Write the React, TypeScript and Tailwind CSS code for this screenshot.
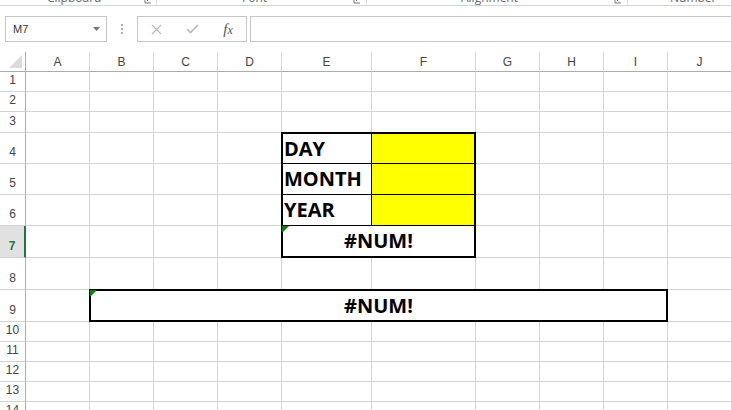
import React from "react";

const COLS = ["A", "B", "C", "D", "E", "F", "G", "H", "I", "J"];
const ROWS = Array.from({ length: 15 }, (_, i) => i + 1);

// cells hidden under the merged / bordered blocks
function isCovered(r: number, c: number) {
  if (r >= 4 && r <= 7 && (c === 4 || c === 5)) return true;
  if (r === 9 && c >= 1 && c <= 8) return true;
  return false;
}

function ErrorMark({ className }: { className: string }) {
  return (
    <svg className={className} width="7" height="7" viewBox="0 0 7 7">
      <polygon points="0,0 7,0 0,7" fill="#107c10" />
    </svg>
  );
}

function Launcher() {
  return (
    <svg width="8" height="8" viewBox="0 0 8 8" className="mt-[-4px]">
      <path d="M1 1v6h6M3 5l4-4" stroke="#777" fill="none" strokeWidth="1" />
    </svg>
  );
}

function Ribbon() {
  return (
    <div className="h-[6px] overflow-hidden border-b border-[#d5d5d5] flex font-['Open_Sans',sans-serif] text-[12px] leading-[12px] text-[#666]">
      <div className="w-[157px] flex border-r border-[#e1e1e1]">
        <span className="ml-[47px] mt-[-8px]">Clipboard</span>
        <span className="ml-auto mr-[4px]">
          <Launcher />
        </span>
      </div>
      <div className="w-[210px] flex border-r border-[#e1e1e1]">
        <span className="ml-[85px] mt-[-8px]">Font</span>
        <span className="ml-auto mr-[5px]">
          <Launcher />
        </span>
      </div>
      <div className="w-[261px] flex border-r border-[#e1e1e1]">
        <span className="ml-[94px] mt-[-8px]">Alignment</span>
        <span className="ml-auto mr-[5px]">
          <Launcher />
        </span>
      </div>
      <div className="flex-1 flex">
        <span className="ml-[42px] mt-[-8px]">Number</span>
      </div>
    </div>
  );
}

function FormulaBar() {
  return (
    <div className="mt-[10px] flex h-[26px] pl-[5px] font-['Liberation_Sans',sans-serif]">
      <div className="w-[102px] flex items-center border border-[#c6c6c6] bg-white">
        <span className="ml-[7px] text-[11px] text-[#333]">M7</span>
        <svg className="ml-auto mr-[6px]" width="7" height="4" viewBox="0 0 7 4">
          <polygon points="0,0 7,0 3.5,4" fill="#777" />
        </svg>
      </div>
      <div className="w-[30px] flex flex-col items-center justify-center gap-[2px]">
        <span className="w-[2px] h-[2px] bg-[#b0b0b0]" />
        <span className="w-[2px] h-[2px] bg-[#b0b0b0]" />
        <span className="w-[2px] h-[2px] bg-[#b0b0b0]" />
      </div>
      <div className="w-[110px] flex border border-[#c6c6c6] bg-white">
        <div className="w-[36px] flex items-center justify-center">
          <svg width="11" height="11" viewBox="0 0 11 11">
            <path d="M1 1L10 10M10 1L1 10" stroke="#b8b8b8" strokeWidth="1.3" />
          </svg>
        </div>
        <div className="w-[36px] flex items-center justify-center">
          <svg width="13" height="10" viewBox="0 0 13 10">
            <path d="M1 5L4.5 8.5L12 1" stroke="#b8b8b8" strokeWidth="1.6" fill="none" />
          </svg>
        </div>
        <div className="w-[36px] flex items-center justify-center font-['Liberation_Serif',serif] italic text-[15px] text-[#555]">
          f<span className="text-[12px] mt-[2px]">x</span>
        </div>
      </div>
      <div className="ml-[3px] flex-1 -mr-px border border-[#c6c6c6] bg-white" />
    </div>
  );
}

function Sheet() {
  return (
    <div className="mt-[10px] grid grid-cols-[26px_64px_64px_64px_64px_90px_104px_64px_64px_64px_64px] grid-rows-[20px_20px_20px_21px_31px_31px_31px_32px_32px_32px_20px_20px_20px_20px_20px_20px] font-['Liberation_Sans',sans-serif] text-[12px] text-[#444]">
      {/* header row */}
      <div className="border-r border-b border-[#ababab] relative">
        <svg className="absolute left-0 top-0" width="25" height="19" viewBox="0 0 25 19">
          <polygon points="22,3 22,16 9,16" fill="#dcdcdc" />
        </svg>
      </div>
      {COLS.map((col) => (
        <div
          key={col}
          className="flex items-center justify-center border-r border-r-[#d8d8d8] border-b border-b-[#ababab]"
        >
          {col}
        </div>
      ))}

      {ROWS.map((r) => (
        <React.Fragment key={r}>
          {r === 7 ? (
            <div className="flex items-end justify-center pb-[3px] leading-[16px] bg-[#e1e1e1] border-r-2 border-r-[#217346] border-b border-b-[#d4d4d4] text-[#217346] font-bold">
              {r}
            </div>
          ) : (
            <div className="flex items-end justify-center pb-[3px] leading-[16px] border-r border-r-[#ababab] border-b border-b-[#d4d4d4]">
              {r}
            </div>
          )}
          {COLS.map((col, c) =>
            isCovered(r, c) ? null : (
              <div key={col + r} className="border-r border-b border-[#d4d4d4]" />
            )
          )}
        </React.Fragment>
      ))}

      {/* E4:F7 block */}
      <div className="col-start-6 col-span-2 row-start-5 row-span-4 -ml-px -mt-px border-2 border-black bg-white grid grid-cols-[89px_1fr] grid-rows-[30px_31px_31px_30px] font-['Open_Sans',sans-serif] font-bold text-[20px] text-black">
        <div className="flex items-center pl-[1px] border-r border-b border-black">DAY</div>
        <div className="bg-[#ffff00] border-b border-black" />
        <div className="flex items-center pl-[1px] border-r border-b border-black">MONTH</div>
        <div className="bg-[#ffff00] border-b border-black" />
        <div className="flex items-center pl-[1px] border-r border-b border-black">YEAR</div>
        <div className="bg-[#ffff00] border-b border-black" />
        <div className="col-span-2 relative flex items-center justify-center">
          <ErrorMark className="absolute top-0 left-[-1px]" />
          #NUM!
        </div>
      </div>

      {/* B9:I9 merged */}
      <div className="col-start-3 col-span-8 row-start-10 -ml-px -mt-px border-2 border-black bg-white relative flex items-center justify-center font-['Open_Sans',sans-serif] font-bold text-[20px] text-black">
        <ErrorMark className="absolute top-[-1px] left-[-1px]" />
        #NUM!
      </div>
    </div>
  );
}

export default function App() {
  return (
    <div className="w-[731px] h-[410px] overflow-hidden bg-white">
      <Ribbon />
      <FormulaBar />
      <Sheet />
    </div>
  );
}
